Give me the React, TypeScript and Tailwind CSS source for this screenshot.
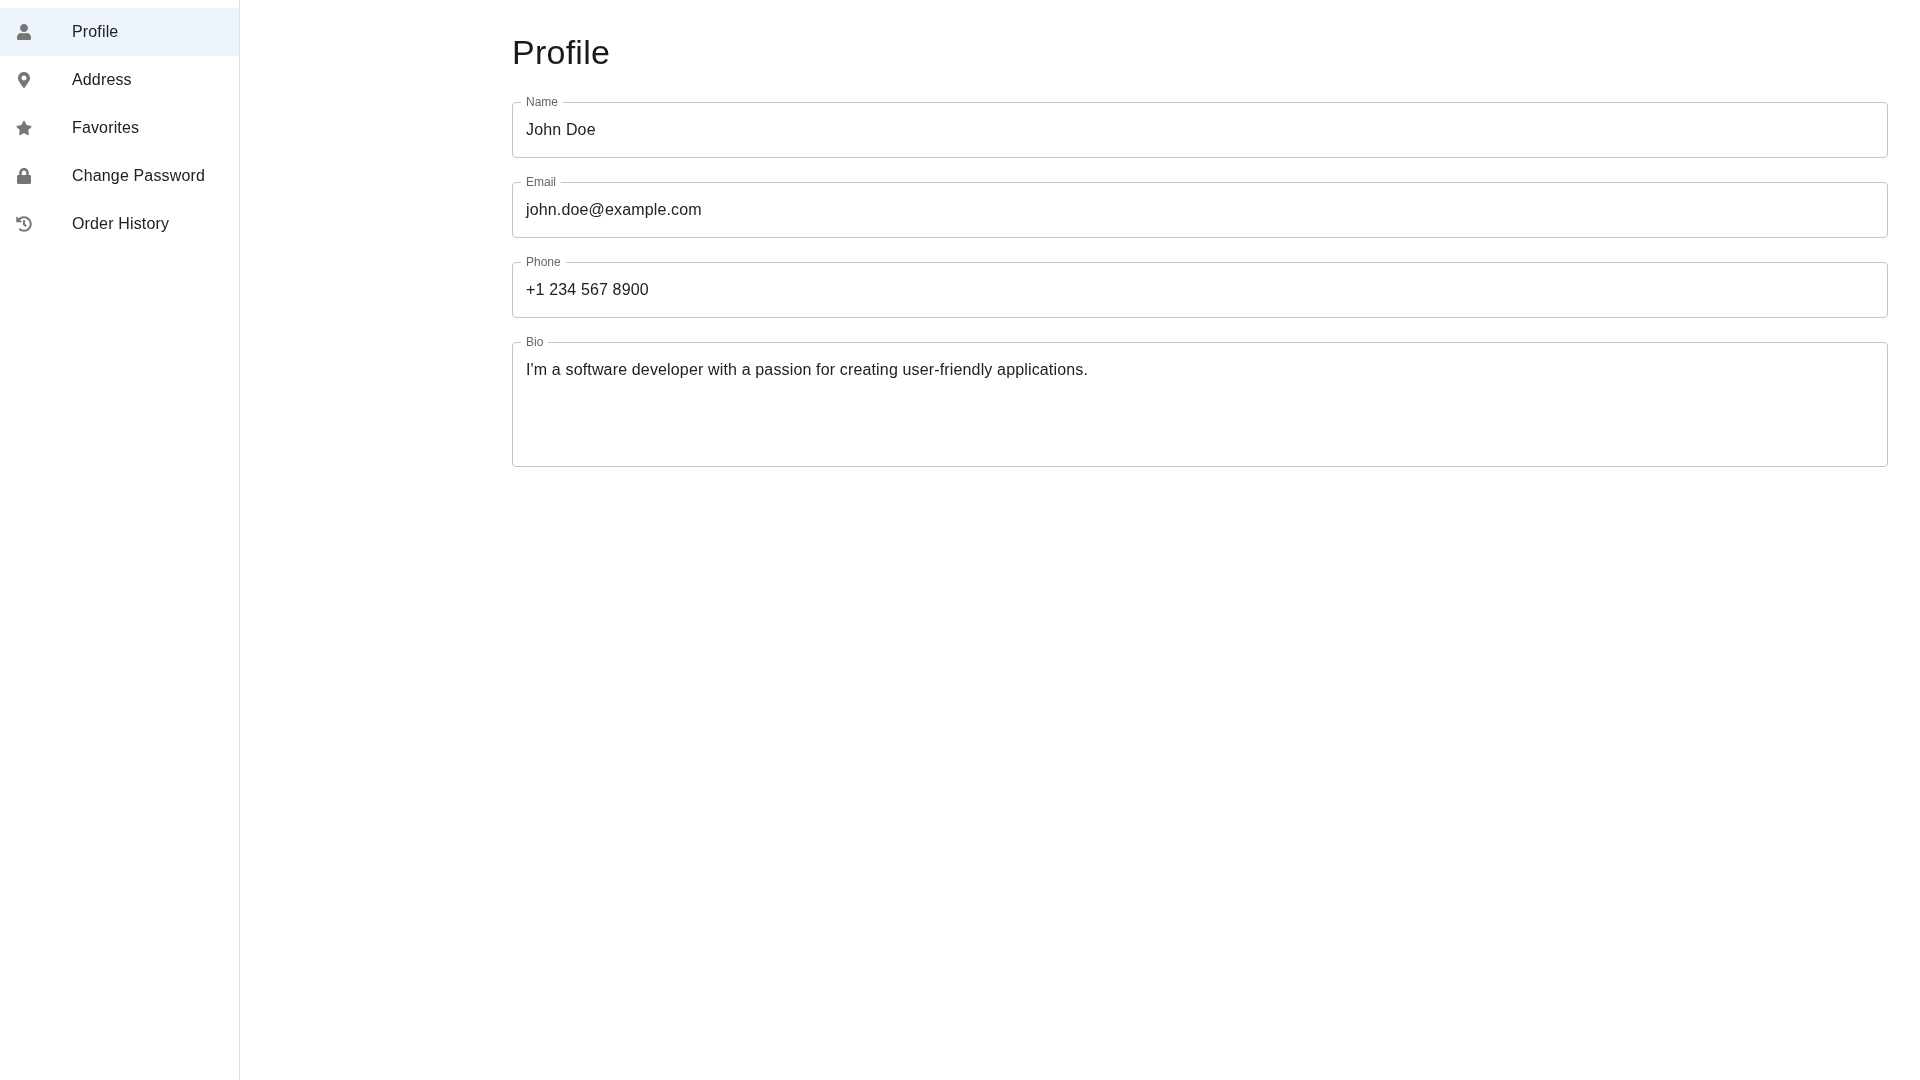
import React from 'react';
import { FaUser, FaMapMarkerAlt, FaStar, FaLock, FaHistory } from 'react-icons/fa';

const FONT = "font-['Liberation_Sans','Helvetica','Arial',sans-serif]";

const NAV_ITEMS = [
  { label: 'Profile', icon: FaUser },
  { label: 'Address', icon: FaMapMarkerAlt },
  { label: 'Favorites', icon: FaStar },
  { label: 'Change Password', icon: FaLock },
  { label: 'Order History', icon: FaHistory },
];

const FIELDS = [
  { label: 'Name', value: 'John Doe' },
  { label: 'Email', value: 'john.doe@example.com' },
  { label: 'Phone', value: '+1 234 567 8900' },
];

const Field: React.FC<{ label: string; value: string; multiline?: boolean }> = ({ label, value, multiline }) => (
  <div className="relative">
    <div
      className={`border border-[#c4c4c4] rounded px-[13px] py-[15px] text-base leading-[23px] tracking-[0.15px] text-[#212121] ${
        multiline ? 'h-[125px]' : 'h-[56px]'
      }`}
    >
      <div className="will-change-transform">{value}</div>
    </div>
    {/* Notched label sitting on the border */}
    <span className="absolute left-[9px] -top-[7px] bg-white px-[5px] text-xs leading-[15px] text-[#666666]">
      <span className="block will-change-transform">{label}</span>
    </span>
  </div>
);

export default function App() {
  return (
    <div className={`flex min-h-screen bg-white ${FONT}`}>
      <aside className="w-[240px] shrink-0 border-r border-[#e0e0e0] py-2">
        <ul>
          {NAV_ITEMS.map((item, i) => {
            const Icon = item.icon;
            return (
              <li
                key={item.label}
                className={`flex items-center h-[48px] px-4 ${i === 0 ? 'bg-[#edf4fb]' : ''}`}
              >
                <span className="w-[56px] shrink-0">
                  <Icon className="w-4 h-4 text-[#757575]" />
                </span>
                <span className="text-base leading-6 tracking-[0.15px] text-[#212121] will-change-transform">
                  {item.label}
                </span>
              </li>
            );
          })}
        </ul>
      </aside>

      <main className="flex-1 pl-[272px] pr-[32px] pt-[32px]">
        <h1 className="text-[34px] leading-[40px] tracking-[0.25px] text-[#1a1a1a] mb-[30px] will-change-transform">
          Profile
        </h1>
        <div className="flex flex-col gap-6">
          {FIELDS.map((f) => (
            <Field key={f.label} label={f.label} value={f.value} />
          ))}
          <Field
            label="Bio"
            value="I'm a software developer with a passion for creating user-friendly applications."
            multiline
          />
        </div>
      </main>
    </div>
  );
}
